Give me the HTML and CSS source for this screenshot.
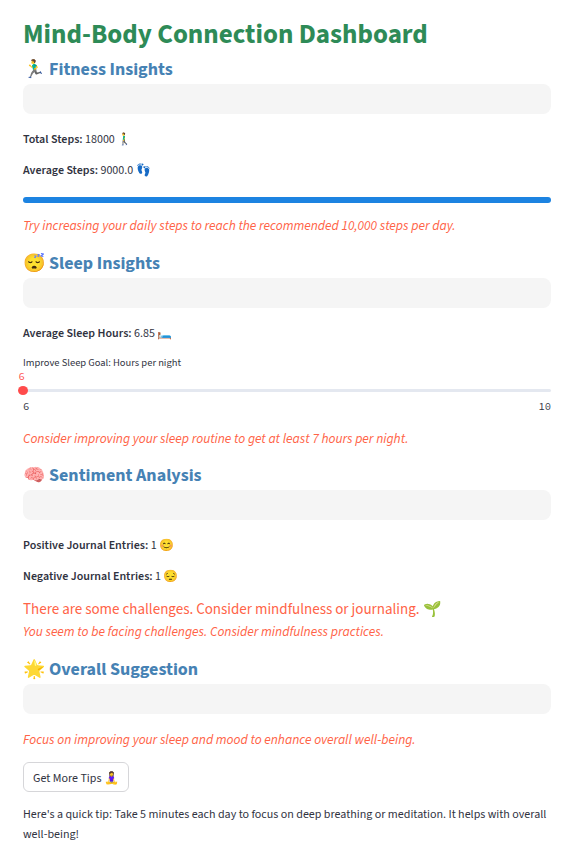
FILE: index.html
```html
<!DOCTYPE html>
<html lang="en">
<head>
<meta charset="utf-8">
<title>Mind-Body Connection Dashboard</title>
<link rel="stylesheet" href="styles.css">
</head>
<body>
<main class="dashboard">
  <h1 class="title">Mind-Body Connection Dashboard</h1>

  <section>
    <h2 class="heading"><span class="emoji">🏃‍♂️</span>Fitness Insights</h2>
    <div class="card"></div>
    <p class="metric"><b>Total Steps:</b> 18000 <span class="emoji">🚶‍♂️</span></p>
    <p class="metric"><b>Average Steps:</b> 9000.0 <span class="emoji">👣</span></p>
    <div class="progress"></div>
    <p class="advice">Try increasing your daily steps to reach the recommended 10,000 steps per day.</p>
  </section>

  <section>
    <h2 class="heading"><span class="emoji">😴</span>Sleep Insights</h2>
    <div class="card"></div>
    <p class="metric"><b>Average Sleep Hours:</b> 6.85 <span class="emoji">🛏️</span></p>
    <div class="slider">
      <label class="slider-label">Improve Sleep Goal: Hours per night</label>
      <div class="slider-value">6</div>
      <div class="track"><span class="thumb"></span></div>
      <div class="ticks"><span>6</span><span>10</span></div>
    </div>
    <p class="advice sleep-advice">Consider improving your sleep routine to get at least 7 hours per night.</p>
  </section>

  <section>
    <h2 class="heading"><span class="emoji">🧠</span>Sentiment Analysis</h2>
    <div class="card"></div>
    <p class="metric"><b>Positive Journal Entries:</b> 1 <span class="emoji">😊</span></p>
    <p class="metric"><b>Negative Journal Entries:</b> 1 <span class="emoji">😔</span></p>
    <p class="challenge">There are some challenges. Consider mindfulness or journaling. <span class="emoji">🌱</span></p>
    <p class="advice">You seem to be facing challenges. Consider mindfulness practices.</p>
  </section>

  <section>
    <h2 class="heading"><span class="emoji">🌟</span>Overall Suggestion</h2>
    <div class="card"></div>
    <p class="advice final">Focus on improving your sleep and mood to enhance overall well-being.</p>
    <button class="button" type="button">Get More Tips <span class="emoji">🧘‍♀️</span></button>
    <p class="tip">Here's a quick tip: Take 5 minutes each day to focus on deep breathing or meditation. It helps with overall well-being!</p>
  </section>
</main>
</body>
</html>
```

FILE: styles.css
```css
* { box-sizing: border-box; }
body {
  margin: 0;
  background: #fff;
  color: #31333f;
  font-family: "Source Sans 3", "Noto Sans CJK SC", sans-serif;
  font-size: 12px;
}
h1, h2, p { margin: 0; }
b { font-weight: 600; }
.dashboard { padding: 16px 27px 0 23px; }
.title { height: 36px; font-size: 27px; line-height: 38px; font-weight: 700; color: #2e8b57; white-space: nowrap; }
.heading {
  display: flex;
  gap: 4px;
  height: 32px;
  line-height: 36px;
  font-size: 18px;
  color: #4682b4;
  white-space: nowrap;
}
.heading .emoji { width: 22px; }
.card { height: 30px; border-radius: 8px; background: #f5f5f5; margin-bottom: 10px; }
.metric { height: 31px; line-height: 31px; white-space: nowrap; }
.progress { height: 6px; margin: 11px 0 12px; border-radius: 3px; background: #1c83e1; }
.advice {
  height: 22px;
  margin-bottom: 9px;
  line-height: 22px;
  font-size: 13.5px;
  font-style: italic;
  color: #ff6347;
  white-space: nowrap;
}
.sleep-advice { margin-bottom: 8px; }
.slider { height: 79px; }
.slider-label { display: block; height: 20px; line-height: 28px; font-size: 10.5px; }
.slider-value {
  height: 15px;
  line-height: 15px;
  margin-left: -4.6px;
  font-family: "Source Code Pro", "DejaVu Sans Mono", monospace;
  font-size: 10.5px;
  color: #ff4b4b;
}
.track { position: relative; height: 3px; margin-top: 5px; border-radius: 2px; background: #e4e8f0; }
.thumb {
  position: absolute;
  left: -5px;
  top: -3px;
  width: 10px;
  height: 9px;
  border-radius: 50%;
  background: #ff4b4b;
}
.ticks {
  display: flex;
  justify-content: space-between;
  height: 16px;
  margin-top: 7px;
  line-height: 16px;
  font-family: "Source Code Pro", "DejaVu Sans Mono", monospace;
  font-size: 10.5px;
}
.challenge { height: 29px; line-height: 35px; font-size: 15px; color: #ff6347; white-space: nowrap; }
.final { margin: 15px 0 11px; }
.button {
  display: block;
  width: 106px;
  height: 30px;
  padding: 3px 0 0;
  border: 1px solid #d6d6d9;
  border-radius: 6px;
  background: #fff;
  color: inherit;
  font: inherit;
  line-height: 25px;
}
.tip { margin-top: 13px; line-height: 20px; }
```
